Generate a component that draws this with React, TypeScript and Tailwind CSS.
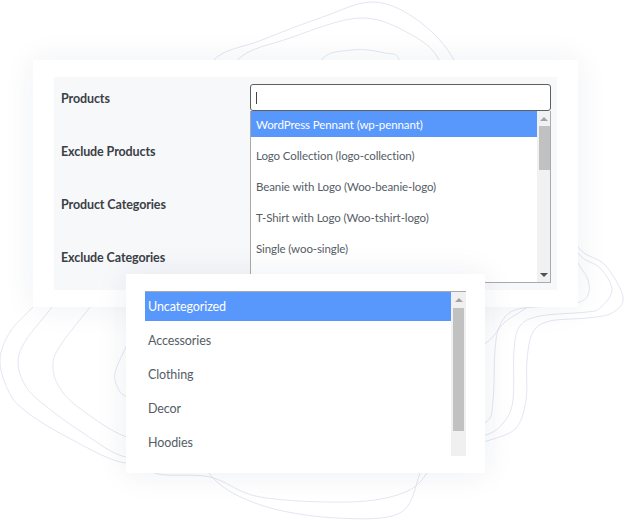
import React from "react";

type Pt = [number, number];

// catmull-rom -> cubic bezier, keeps the contour lines soft
const smooth = (pts: Pt[]) => {
  let d = `M${pts[0][0]},${pts[0][1]}`;
  for (let i = 0; i < pts.length - 1; i++) {
    const p0 = pts[i - 1] || pts[i];
    const p1 = pts[i];
    const p2 = pts[i + 1];
    const p3 = pts[i + 2] || p2;
    const c1 = [p1[0] + (p2[0] - p0[0]) / 6, p1[1] + (p2[1] - p0[1]) / 6];
    const c2 = [p2[0] - (p3[0] - p1[0]) / 6, p2[1] - (p3[1] - p1[1]) / 6];
    d += ` C${c1[0]},${c1[1]} ${c2[0]},${c2[1]} ${p2[0]},${p2[1]}`;
  }
  return d;
};

const contours: Pt[][] = [
  // top
  [[200, 120], [212, 62], [262, 40], [320, 18], [374, 2], [420, 22], [455, 62], [470, 120]],
  [[230, 120], [236, 62], [290, 38], [360, 18], [410, 34], [440, 62], [450, 120]],
  [[310, 120], [320, 62], [352, 50], [385, 53], [400, 62], [410, 120]],
  // right
  [[560, 200], [578, 247], [605, 265], [623, 297], [612, 313], [587, 318], [550, 321], [533, 332], [527, 360], [526, 400], [516, 428], [490, 440], [450, 450]],
  [[560, 210], [578, 253], [600, 268], [612, 290], [600, 308], [587, 312], [540, 316], [520, 326], [514, 350], [513, 400], [504, 422], [486, 435], [450, 440]],
  [[560, 230], [578, 263], [588, 280], [588, 295], [577, 303], [550, 306], [515, 310], [500, 325], [495, 350], [493, 400], [486, 422], [450, 430]],
  [[540, 290], [527, 307], [505, 322], [486, 343], [450, 360]],
  // left
  [[60, 280], [33, 307], [10, 332], [0, 360], [8, 390], [24, 410], [67, 437], [127, 463], [160, 440]],
  [[70, 280], [52, 307], [26, 340], [18, 362], [25, 385], [42, 403], [83, 433], [127, 457], [160, 440]],
  [[110, 280], [90, 307], [62, 343], [53, 363], [58, 385], [78, 407], [127, 437], [160, 430]],
  [[140, 320], [126, 347], [115, 373], [118, 388], [127, 397], [160, 410]],
  // bottom
  [[140, 440], [152, 472], [210, 477], [260, 497], [350, 502], [403, 493], [427, 473], [440, 440]],
  [[190, 440], [217, 482], [267, 507], [337, 518], [400, 513], [420, 473], [430, 440]],
];

const products = [
  "WordPress Pennant (wp-pennant)",
  "Logo Collection (logo-collection)",
  "Beanie with Logo (Woo-beanie-logo)",
  "T-Shirt with Logo (Woo-tshirt-logo)",
  "Single (woo-single)",
];

const categories = ["Uncategorized", "Accessories", "Clothing", "Decor", "Hoodies"];

const labels = ["Products", "Exclude Products", "Product Categories", "Exclude Categories"];

const UpArrow = ({ color }: { color: string }) => (
  <div
    className="w-0 h-0 border-l-[4px] border-r-[4px] border-b-[4px] border-l-transparent border-r-transparent"
    style={{ borderBottomColor: color }}
  />
);

const App = () => {
  return (
    <div className="relative w-[625px] h-[530px] bg-white overflow-hidden font-['Lato',sans-serif]">
      {/* background contour lines */}
      <svg className="absolute inset-0" width="625" height="530" viewBox="0 0 625 530" fill="none">
        {contours.map((c, i) => (
          <path key={i} d={smooth(c)} stroke="#dcdfed" strokeWidth="0.8" />
        ))}
      </svg>

      <div className="relative pt-[60px] pl-[33px]">
        {/* Main settings card */}
        <div className="w-[545px] h-[247px] bg-white px-[21px] py-[17px] shadow-[0_0_30px_rgba(30,40,90,0.07)]">
          <div className="flex h-full bg-[#f7f8fa]">
            <div className="w-[196px] pl-[7px] pt-[12px] flex flex-col gap-[33px]">
              {labels.map((label) => (
                <div key={label} className="h-[20px] leading-[20px] text-[12.5px] font-bold tracking-[-0.1px] text-[#3a4046]">
                  {label}
                </div>
              ))}
            </div>

            <div className="w-[301px] pt-[7px]">
              <div className="h-[27px] border border-[#5e5e5e] rounded-[3px] bg-white flex items-center pl-[5px]">
                <span className="w-px h-[12px] bg-[#444]" />
              </div>
              <div className="flex h-[172px] bg-white border-x border-b border-[#aaaaaa]">
                <div className="flex-1 flex flex-col gap-[5px]">
                  {products.map((p, i) => (
                    <div
                      key={p}
                      className={`h-[26px] leading-[27px] pl-[5px] text-[11.5px] tracking-[-0.1px] ${
                        i === 0 ? "bg-[#5897fb] text-white" : "text-[#555d66]"
                      }`}
                    >
                      {p}
                    </div>
                  ))}
                </div>
                <div className="w-[13px] bg-[#f1f1f1] flex flex-col items-center">
                  <div className="h-[15px] flex items-center justify-center">
                    <UpArrow color="#a3a3a3" />
                  </div>
                  <div className="w-[11px] ml-[1px] h-[44px] bg-[#c1c1c1]" />
                  <div className="flex-1" />
                  <div className="h-[15px] flex items-center justify-center">
                    <div className="w-0 h-0 border-l-[4px] border-r-[4px] border-t-[4px] border-l-transparent border-r-transparent border-t-[#505050]" />
                  </div>
                </div>
              </div>
            </div>
          </div>
        </div>

        {/* Categories card */}
        <div className="relative ml-[93px] -mt-[33px] w-[359px] h-[199px] bg-white px-[19px] py-[17px] shadow-[0_0_30px_rgba(30,40,90,0.08)]">
          <div className="flex h-[165px] border-t border-[#a9a9a9]">
            <div className="flex-1 flex flex-col gap-[5px]">
              {categories.map((c, i) => (
                <div
                  key={c}
                  className={`h-[29px] leading-[29px] pl-[3px] text-[12.5px] tracking-[-0.1px] ${
                    i === 0 ? "bg-[#5897fb] text-white" : "text-[#555d66]"
                  }`}
                >
                  {c}
                </div>
              ))}
            </div>
            <div className="w-[15px] bg-[#f0f0f0] flex flex-col items-center">
              <div className="h-[16px] flex items-center justify-center">
                <UpArrow color="#a3a3a3" />
              </div>
              <div className="w-[11px] h-[123px] bg-[#c1c1c1]" />
            </div>
          </div>
        </div>
      </div>
    </div>
  );
};

export default App;
